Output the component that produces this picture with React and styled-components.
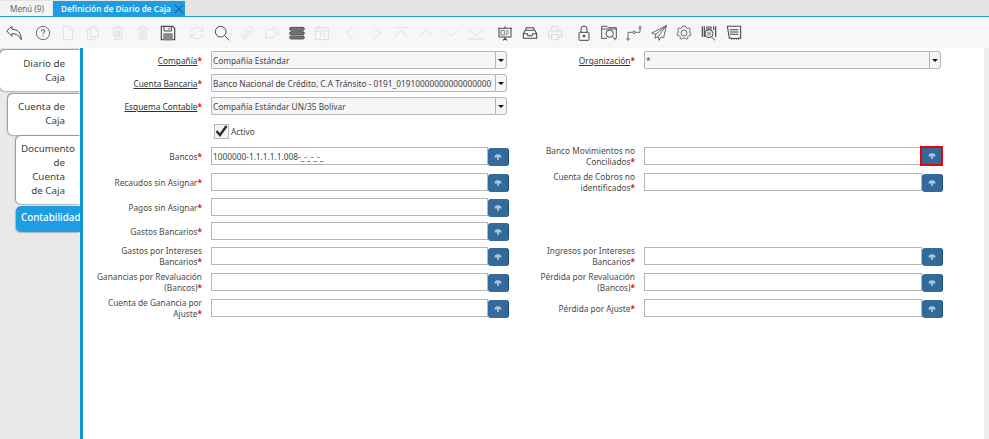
import React from "react";
import styled, { createGlobalStyle } from "styled-components";

const GlobalStyle = createGlobalStyle`
  html, body {
    margin: 0;
    padding: 0;
    height: 100%;
    background: #fff;
    overflow: hidden;
  }
  body {
    font-family: "Noto Sans", "Open Sans", sans-serif;
    color: #333;
  }
  #root { height: 100%; }
`;

const Svg = ({ children, off }) => (
  <svg viewBox="0 0 24 24" fill="none" stroke={off ? "#d9d9d9" : "#4a4a4a"} strokeWidth={1.2}>
    {children}
  </svg>
);

const icons = {
  back: <path d="M1 9 9 2v4.500c8 0 14 5 14 15.500-3-6-7-9-14-9V17z" strokeWidth="1.500" />,
  help: <><circle cx="12" cy="12" r="10" /><path d="M9.500 9.500a2.500 2.500 0 1 1 3.700 2.200c-.8.5-1.200 1-1.200 2M12 15.500v1.500" strokeWidth="1.500" /></>,
  doc: <path d="M5 2h9l5 5v15H5zM14 2v5h5" />,
  copy: <><path d="M9 2h6l5 5v11H9zM15 2v5h5" /><path d="M9 6H4v16h11v-4" /></>,
  trash: <path d="M4 5h16M9 5V2h6v3M5.500 5l1.500 17h10l1.500-17M10 8v11M12 8v11M14 8v11" />,
  save: (
    <>
      <path d="M2 2h17l3 3v17H2z" strokeWidth="1.800" />
      <path d="M6 2v7h11V2M13.500 4v3" strokeWidth="1.500" />
      <path d="M5.500 22v-9h13v9z" fill="#8a8a8a" stroke="#8a8a8a" />
    </>
  ),
  refresh: <path d="M3 11a9 9 0 0 1 16-4l2 2m0-6v6h-6M21 13a9 9 0 0 1-16 4l-2-2m0 6v-6h6" />,
  search: <><circle cx="10" cy="10" r="8" strokeWidth="1.500" /><path d="m16 16 7 7" strokeWidth="1.500" /></>,
  clip: <path d="m21 10-10 10a5 5 0 0 1-7-7L14 3a3 3 0 0 1 5 4.500L9 18a1.500 1.500 0 0 1-2-2l9-9" />,
  chat: <><path d="M10 7a7.500 6 0 1 1-4 11l-4 2 1.500-4A6 6 0 0 1 10 7z" /><path d="M12 4a7.500 6 0 0 1 9.500 7l1 4-3.500-1.500" /></>,
  lines: (
    <g fill="#777" stroke="#3c3c3c">
      <rect x="1" y="3.500" width="22" height="4.500" rx="2.200" />
      <rect x="1" y="10" width="22" height="4.500" rx="2.200" />
      <rect x="1" y="16.500" width="22" height="4.500" rx="2.200" />
    </g>
  ),
  calendar: (
    <>
      <path d="M2 4h20v18H2zM2 9h20M7 2v3M17 2v3" />
      <path d="M8 12.500h3L9.500 15c2 0 2 4-1.500 3M14 13l1.500-.5V18.500" />
    </>
  ),
  left: <path d="m15 2-10 10 10 10" />,
  right: <path d="m9 2 10 10-10 10" />,
  first: <path d="M1 4h22M2 19l10-11 10 11" />,
  up: <path d="m2 17 10-10 10 10" />,
  down: <path d="m2 7 10 10 10-10" />,
  last: <path d="M1 21h22M2 5l10 11 10-11" />,
  report: (
    <>
      <path d="M3 5h18v13H3zM1.500 5h21M12 2V5M12 18v2M9 23l3-3 3 3" strokeWidth="1.600" />
      <path d="M6 8h5v7H6zM13 9h5M13 12h5M13 14.500h3" strokeWidth="1" />
    </>
  ),
  archive: (
    <>
      <path d="M7 4h10l5 9v7H2v-7z" strokeWidth="1.600" />
      <path d="M2 13h6l1 3h6l1-3h6M6 8h12" strokeWidth="1.600" />
    </>
  ),
  print: <path d="M7 9V2h10v7M4 9h16a2 2 0 0 1 2 2v7h-5M7 18H2v-7a2 2 0 0 1 2-2M7 14h10v8H7z" strokeWidth="1.500" />,
  lock: (
    <>
      <path d="M7.500 11V6a4.500 4.500 0 0 1 9 0v5" strokeWidth="1.500" />
      <rect x="4.500" y="11" width="15" height="12" rx="1" strokeWidth="1.500" />
      <circle cx="12" cy="16.500" r="1.500" fill="#333" />
    </>
  ),
  zoomDoc: (
    <>
      <path d="M1 20V2h8l2 2h12v16h-3M1 20h8M1 6h22" strokeWidth="1.400" />
      <circle cx="13" cy="13" r="5.500" strokeWidth="1.500" />
      <path d="m17 17 5 6" strokeWidth="1.500" />
    </>
  ),
  flow: (
    <>
      <circle cx="3" cy="21" r="1.800" />
      <circle cx="12" cy="11" r="1.800" />
      <circle cx="21" cy="4" r="1.800" />
      <path d="M3 19v-8h7M14 11h7V6" />
    </>
  ),
  send: <path d="M23 1 1 12l6 2 16-13-12 16 1 6 3-5 4 1zM7 14l-1 6 5-3" />,
  gear: (
    <>
      <path d="M12 1.500l2.200.4 1 2.300 2.500 1 2.200-.9 1.600 2.400-1.200 2.100.4 2.700 1.800 1.400-.8 2.800-2.400.2-1.700 2 .1 2.400-2.700 1-1.600-1.700h-2.800l-1.600 1.700-2.700-1 .1-2.400-1.700-2-2.400-.2-.8-2.800 1.800-1.400.4-2.700-1.200-2.100 1.600-2.400 2.200.9 2.500-1 1-2.300z" />
      <circle cx="12" cy="12" r="4.500" />
    </>
  ),
  barcode: (
    <>
      <path d="M2 2v16M5 2v16M9 2v6M12 2v5M15 2v5M19 2v6M22 2v16" strokeWidth="1.800" />
      <circle cx="12" cy="13" r="6" strokeWidth="1.500" />
      <path d="M10.500 10v6M13.500 10v6" />
      <path d="m16 18 5 5" strokeWidth="1.500" />
    </>
  ),
  ticket: (
    <>
      <path d="M2 2h20v18c-1.500-1-2.500-.5-3 1-1-1.500-2.500-1.500-3.500 0-1-1.500-2.500-1.500-3.500 0-1-1.500-2.500-1.500-3.500 0-.5-1.500-2-2-3.500-1z" strokeWidth="1.600" />
      <path d="M5.500 7h13M5.500 10.500h13M5.500 14h13" strokeWidth="1.600" />
    </>
  ),
};

const toolbarItems = [
  { k: "back" },
  { k: "help", sep: 1 },
  { k: "doc", off: 1 },
  { k: "copy", off: 1 },
  { k: "trash", off: 1 },
  { k: "trash", off: 1 },
  { k: "save" },
  { k: "refresh", off: 1, sep: 1 },
  { k: "search" },
  { k: "clip", off: 1 },
  { k: "chat", off: 1 },
  { k: "lines" },
  { k: "calendar", off: 1 },
  { k: "left", off: 1, sep: 1 },
  { k: "right", off: 1 },
  { k: "first", off: 1 },
  { k: "up", off: 1 },
  { k: "down", off: 1 },
  { k: "last", off: 1 },
  { k: "report", sep: 1 },
  { k: "archive" },
  { k: "print", off: 1 },
  { k: "lock", sep: 1 },
  { k: "zoomDoc" },
  { k: "flow" },
  { k: "send" },
  { k: "gear" },
  { k: "barcode" },
  { k: "ticket" },
];

const Page = styled.div`
  width: 989px;
  height: 439px;
  display: flex;
  flex-direction: column;
  overflow: hidden;
`;

const TabBar = styled.div`
  height: 16px;
  flex: none;
  display: flex;
  align-items: flex-end;
  background: #e4e4e4;
  border-bottom: 1px solid #1f9de2;
`;

const WindowTab = styled.div`
  height: 15px;
  display: flex;
  align-items: center;
  justify-content: space-between;
  box-sizing: border-box;
  width: ${(p) => (p.$active ? 132 : 52)}px;
  padding: ${(p) => (p.$active ? "0 1px 0 8px" : "0 0 0 10px")};
  margin-right: 1px;
  font-size: 8.200px;
  font-weight: ${(p) => (p.$active ? 600 : 400)};
  color: ${(p) => (p.$active ? "#eaf6fd" : "#666")};
  background: ${(p) => (p.$active ? "#1f9de2" : "#f3f3f3")};
  white-space: nowrap;
`;

const Toolbar = styled.div`
  height: 31px;
  flex: none;
  display: flex;
  align-items: center;
  background: #f7f7f7;
  padding-left: 1px;
`;

const ToolButton = styled.div`
  width: 25px;
  height: 24px;
  flex: none;
  display: flex;
  align-items: center;
  justify-content: center;
  margin-left: ${(p) => (p.$sep ? "4px" : "0")};

  svg {
    width: 16px;
    height: 16px;
  }
`;

const Body = styled.div`
  flex: 1;
  display: flex;
  min-height: 0;
`;

const Sidebar = styled.div`
  width: 80px;
  flex: none;
  background: #e9e9e9;
  padding-top: 2px;
  display: flex;
  flex-direction: column;
  align-items: flex-end;
`;

const SideTab = styled.div`
  width: ${(p) => p.$w}px;
  height: ${(p) => p.$h}px;
  margin-top: ${(p) => p.$mt || 0}px;
  box-sizing: border-box;
  padding: ${(p) => p.$pt}px 15px 0 0;
  text-align: right;
  font-size: 9.800px;
  line-height: 14px;
  white-space: nowrap;
  overflow: hidden;
  border-radius: 5px 0 0 5px;
  color: ${(p) => (p.$active ? "#fff" : "#3c3c3c")};
  background: ${(p) => (p.$active ? "#1f9de2" : "#fff")};
  box-shadow: ${(p) => (p.$active ? "-1px 1px 1px #b5b5b5" : "-1px -1px 1px #9a9a9a, -1px 1px 1px #b5b5b5")};
`;

const Overhang = styled.span`
  display: inline-block;
  margin-right: -10px;
`;

const ActiveText = styled.div`
  text-align: left;
  margin: 0 -15px 0 5px;
  font-weight: 500;
`;

const Divider = styled.div`
  width: 3px;
  flex: none;
  background: #0f96d6;
`;

const Content = styled.div`
  flex: 1;
  min-width: 0;
  display: flex;
  justify-content: space-between;
`;

const Form = styled.div`
  width: 861px;
  padding-top: 3px;
  display: grid;
  grid-template-columns: 120px 298px 119px 300px;
  column-gap: 8px;
  justify-content: start;
  align-content: start;
  grid-template-rows: 23px 23px 25px 25px 26px 25px 24px 25px 26px 26px 26px;
`;

const Scrollbar = styled.div`
  width: 5px;
  flex: none;
  background: #eee;
`;

const Label = styled.label`
  grid-column: ${(p) => (p.$right ? 3 : 1)};
  height: 18px;
  padding-right: 1px;
  display: flex;
  flex-direction: column;
  justify-content: center;
  text-align: right;
  font-size: 8.300px;
  line-height: 11px;
  color: #4a4a4a;
`;

const LabelLink = styled.span`
  color: #333;
  text-decoration: underline;
`;

const Req = styled.span`
  color: #e01010;
  font-weight: 700;
`;

const Field = styled.div`
  grid-column: ${(p) => (p.$right ? 4 : 2)};
  height: 18px;
  display: flex;
  align-items: flex-start;
`;

const InputBox = styled.div`
  box-sizing: border-box;
  width: ${(p) => p.$w}px;
  height: 18px;
  padding: 0 1px;
  display: flex;
  align-items: center;
  font-size: 8.300px;
  color: #444;
  white-space: nowrap;
  overflow: hidden;
  border: 1px solid #b5b5b5;
  border-radius: ${(p) => (p.$combo ? "2px 0 0 2px" : "0")};
  border-right-width: ${(p) => (p.$combo ? 0 : 1)}px;
  background: ${(p) => (p.$combo ? "#f6f6f6" : "#fff")};
`;

const ComboArrow = styled.div`
  box-sizing: border-box;
  width: 12px;
  height: 18px;
  display: flex;
  align-items: center;
  justify-content: center;
  border: 1px solid #b5b5b5;
  border-radius: 0 3px 3px 0;
  background: #f6f6f6;

  &::after {
    content: "";
    border-left: 3px solid transparent;
    border-right: 3px solid transparent;
    border-top: 3px solid #111;
  }
`;

const LookupButton = styled.button`
  box-sizing: border-box;
  width: ${(p) => (p.$focus ? 23 : 21)}px;
  height: ${(p) => (p.$focus ? 20 : 18)}px;
  margin: ${(p) => (p.$focus ? "-1px 0 0 -2px" : "1px 0 0 0")};
  padding: 0;
  flex: none;
  display: flex;
  align-items: center;
  justify-content: center;
  border: ${(p) => (p.$focus ? "2px solid #f00000" : "0")};
  border-right: ${(p) => (p.$focus ? "2px solid #f00000" : "1px solid #1d4e78")};
  border-radius: ${(p) => (p.$focus ? 0 : 3)}px;
  background: #33699b;
`;

const ActiveCell = styled.div`
  grid-column: 2;
  height: 18px;
  display: flex;
  align-items: center;
  gap: 2px;
  padding-left: 3px;
  font-size: 8.300px;
  color: #444;
`;

const CheckBox = styled.span`
  box-sizing: border-box;
  width: 15px;
  height: 15px;
  display: flex;
  align-items: center;
  justify-content: center;
  border: 1px solid #aebbc6;
  background: #f4f4f4;
`;

const RowFiller = styled.div`
  grid-column: 3 / 5;
`;

const LookupIcon = () => (
  <svg width="8" height="6" viewBox="0 0 9 7" fill="#a9c6dc">
    <path d="M.5 2.500C1 1 3 .3 4.500 .3S8 1 8.500 2.500V4H5.500v3H3.500V4H.5z" />
  </svg>
);

const TextField = ({ w, combo, children }) => (
  <>
    <InputBox $w={w} $combo={combo}>{children}</InputBox>
    {combo && <ComboArrow />}
  </>
);

const LookupField = ({ right, value, focus }) => (
  <Field $right={right}>
    <InputBox $w={right ? 278 : 277}>{value}</InputBox>
    <LookupButton $focus={focus}><LookupIcon /></LookupButton>
  </Field>
);

const FieldLabel = ({ right, link, lines }) => (
  <Label $right={right}>
    {lines.map((line, i) => (
      <span key={line}>
        {link ? <LabelLink>{line}</LabelLink> : line}
        {i === lines.length - 1 && <Req>*</Req>}
      </span>
    ))}
  </Label>
);

export default function App() {
  return (
    <>
      <GlobalStyle />
      <Page>
        <TabBar>
          <WindowTab>Menú (9)</WindowTab>
          <WindowTab $active>
            Definición de Diario de Caja
            <svg width="10" height="10" viewBox="0 0 10 10" stroke="#1b4f72" strokeWidth="1">
              <path d="m1 1 8 8M9 1 1 9" />
            </svg>
          </WindowTab>
        </TabBar>
        <Toolbar>
          {toolbarItems.map((item, i) => (
            <ToolButton key={i} $sep={item.sep}>
              <Svg off={item.off}>{icons[item.k]}</Svg>
            </ToolButton>
          ))}
        </Toolbar>
        <Body>
          <Sidebar>
            <SideTab $w={80} $h={41} $pt={7}>Diario de<br />Caja</SideTab>
            <SideTab $w={72} $h={41} $mt={3} $pt={6}>Cuenta de<br />Caja</SideTab>
            <SideTab $w={64} $h={68} $mt={1} $pt={6}>
              <Overhang>Documento</Overhang><br />de<br />Cuenta<br />de Caja
            </SideTab>
            <SideTab $w={64} $h={26} $mt={2} $pt={5} $active>
              <ActiveText>Contabilidad</ActiveText>
            </SideTab>
          </Sidebar>
          <Divider />
          <Content>
            <Form>
              <FieldLabel link lines={["Compañía"]} />
              <Field><TextField w={284} combo>Compañía Estándar</TextField></Field>
              <FieldLabel right link lines={["Organización"]} />
              <Field $right><TextField w={285} combo>*</TextField></Field>

              <FieldLabel link lines={["Cuenta Bancaria"]} />
              <Field><TextField w={284} combo>Banco Nacional de Crédito, C.A Tránsito - 0191_01910000000000000000</TextField></Field>
              <RowFiller />

              <FieldLabel link lines={["Esquema Contable"]} />
              <Field><TextField w={284} combo>Compañía Estándar UN/35 Bolívar</TextField></Field>
              <RowFiller />

              <ActiveCell>
                <CheckBox>
                  <svg width="13" height="12" viewBox="0 0 13 12" fill="none" stroke="#2b2b2b" strokeWidth="2.400">
                    <path d="m1.500 6 3.500 4L11.500 1" />
                  </svg>
                </CheckBox>
                Activo
              </ActiveCell>

              <FieldLabel lines={["Bancos"]} />
              <LookupField value="1000000-1.1.1.1.1.008-_-_-_-_" />
              <FieldLabel right lines={["Banco Movimientos no", "Conciliados"]} />
              <LookupField right focus />

              <FieldLabel lines={["Recaudos sin Asignar"]} />
              <LookupField />
              <FieldLabel right lines={["Cuenta de Cobros no", "identificados"]} />
              <LookupField right />

              <FieldLabel lines={["Pagos sin Asignar"]} />
              <LookupField />
              <RowFiller />

              <FieldLabel lines={["Gastos Bancarios"]} />
              <LookupField />
              <RowFiller />

              <FieldLabel lines={["Gastos por Intereses", "Bancarios"]} />
              <LookupField />
              <FieldLabel right lines={["Ingresos por Intereses", "Bancarios"]} />
              <LookupField right />

              <FieldLabel lines={["Ganancias por Revaluación", "(Bancos)"]} />
              <LookupField />
              <FieldLabel right lines={["Pérdida por Revaluación", "(Bancos)"]} />
              <LookupField right />

              <FieldLabel lines={["Cuenta de Ganancia por", "Ajuste"]} />
              <LookupField />
              <FieldLabel right lines={["Pérdida por Ajuste"]} />
              <LookupField right />
            </Form>
            <Scrollbar />
          </Content>
        </Body>
      </Page>
    </>
  );
}
